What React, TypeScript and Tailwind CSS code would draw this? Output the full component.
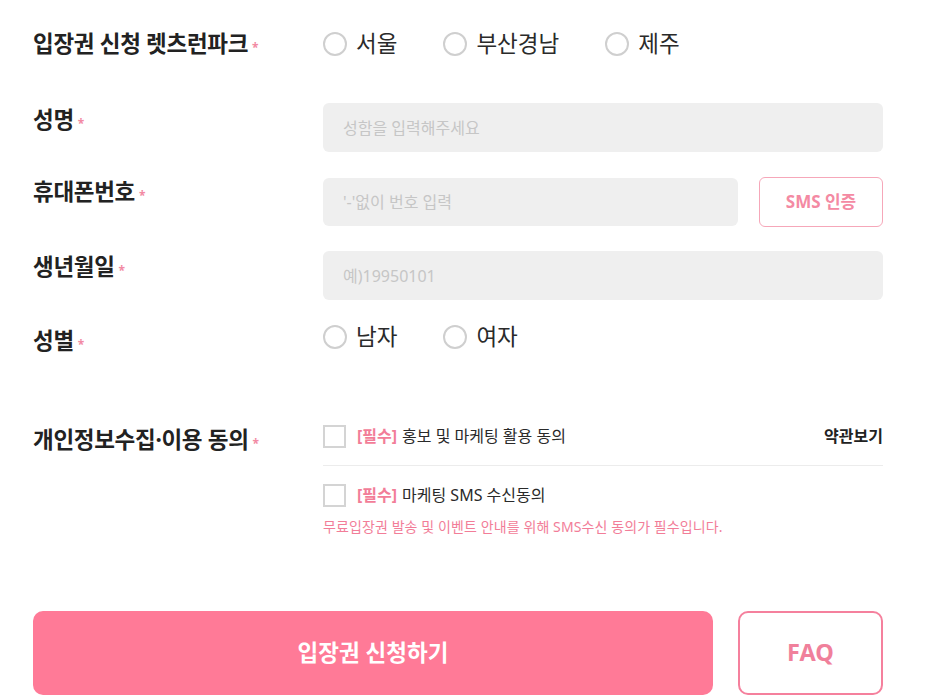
const font = "font-['Noto_Sans','Noto_Sans_CJK_KR',sans-serif]";

function Label({ text, pt }: { text: string; pt: string }) {
  return (
    <div className={`w-[290px] shrink-0 ${pt}`}>
      <span className="text-[22.5px] font-bold leading-[30px] tracking-[-0.3px] text-[#222]">
        {text}
      </span>
      <span className="ml-[4px] align-middle text-[12px] font-bold text-[#f28aa3]">*</span>
    </div>
  );
}

function Radio({ text }: { text: string }) {
  return (
    <label className="flex items-center gap-[9px]">
      <span className="h-[24px] w-[24px] rounded-full border-2 border-[#cfcfcf] bg-white" />
      <span className="text-[22.5px] font-normal leading-[30px] text-[#2a2a2a]">{text}</span>
    </label>
  );
}

function Check({ text }: { text: string }) {
  return (
    <div className="flex h-[23px] items-center">
      <span className="h-[23px] w-[23px] shrink-0 border-2 border-[#d4d4d4] bg-white" />
      <span className="ml-[11px] text-[16px] font-bold leading-[23px] text-[#f27d98]">[필수]</span>
      <span className="ml-[5px] text-[16px] leading-[23px] text-[#2a2a2a]">{text}</span>
    </div>
  );
}

export default function App() {
  return (
    <div className={`${font} w-[942px] bg-white px-[33px] pt-[19px]`}>
      {/* 신청 렛츠런파크 */}
      <div className="flex h-[50px] items-center">
        <Label text="입장권 신청 렛츠런파크" pt="pt-0" />
        <div className="flex items-center gap-[46px]">
          <Radio text="서울" />
          <Radio text="부산경남" />
          <Radio text="제주" />
        </div>
      </div>

      <div className="mt-[34px] flex items-start">
        <Label text="성명" pt="pt-[2px]" />
        <div className="flex h-[49px] w-[560px] items-center rounded-[6px] bg-[#efefef] px-[20px] text-[16px] text-[#c6c6c6]">
          성함을 입력해주세요
        </div>
      </div>

      <div className="mt-[25px] flex items-start">
        <Label text="휴대폰번호" pt="pt-0" />
        <div className="flex w-[560px] items-center gap-[21px]">
          <div className="flex h-[48px] w-[415px] items-center rounded-[6px] bg-[#efefef] px-[20px] text-[16px] text-[#c6c6c6]">
            '-'없이 번호 입력
          </div>
          <button className="h-[50px] w-[124px] rounded-[6px] border border-[#f6a7b9] bg-white text-[17px] font-bold text-[#f48aa3]">
            SMS 인증
          </button>
        </div>
      </div>

      <div className="mt-[24px] flex items-start">
        <Label text="생년월일" pt="pt-px" />
        <div className="flex h-[49px] w-[560px] items-center rounded-[6px] bg-[#efefef] px-[20px] text-[16px] text-[#c6c6c6]">
          예)19950101
        </div>
      </div>

      <div className="mt-[12px] flex items-start">
        <Label text="성별" pt="pt-[14px]" />
        <div className="flex h-[50px] items-center gap-[46px]">
          <Radio text="남자" />
          <Radio text="여자" />
        </div>
      </div>

      {/* 동의 */}
      <div className="mt-[63px] flex items-start">
        <Label text="개인정보수집·이용 동의" pt="pt-0" />
        <div className="w-[560px]">
          <div className="flex items-center justify-between border-b border-[#ececec] pb-[17px]">
            <Check text="홍보 및 마케팅 활용 동의" />
            <span className="text-[16px] font-bold leading-[23px] text-[#222]">약관보기</span>
          </div>
          <div className="mt-[18px]">
            <Check text="마케팅 SMS 수신동의" />
          </div>
          <p className="mt-[10px] text-[14px] leading-[20px] tracking-[0.1px] text-[#f27d98]">
            무료입장권 발송 및 이벤트 안내를 위해 SMS수신 동의가 필수입니다.
          </p>
        </div>
      </div>

      <div className="mt-[74px] flex gap-[25px]">
        <button className="h-[84px] w-[680px] rounded-[10px] bg-[#ff7a97] text-[22.5px] font-bold text-white">
          입장권 신청하기
        </button>
        <button className="h-[84px] w-[145px] rounded-[10px] border-2 border-[#f5809d] bg-white text-[23.5px] font-bold text-[#f0809b]">
          FAQ
        </button>
      </div>
    </div>
  );
}
